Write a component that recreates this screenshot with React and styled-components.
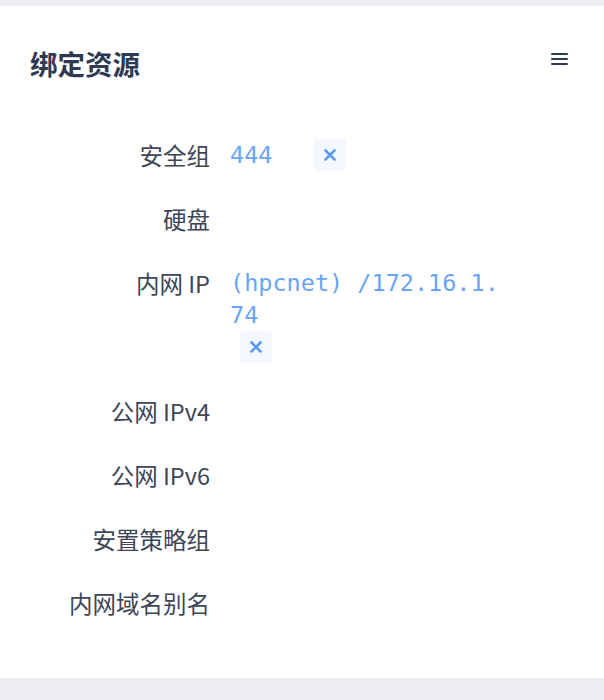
import styled, { createGlobalStyle } from "styled-components";

const GlobalStyle = createGlobalStyle`
  html, body {
    margin: 0;
    padding: 0;
    background: #edeff3;
    font-family: "Noto Sans", "Noto Sans CJK SC", sans-serif;
  }
`;

const Card = styled.section`
  margin-top: 6px;
  background: #ffffff;
  padding: 39px 0 27px;
`;

const Header = styled.header`
  display: flex;
  justify-content: space-between;
  align-items: flex-start;
  padding: 0 36px 0 30px;
  margin-bottom: 58px;
`;

const Title = styled.h2`
  margin: 0;
  font-family: "Noto Sans CJK SC", sans-serif;
  font-size: 27.5px;
  line-height: 36px;
  font-weight: 700;
  color: #2f3a52;
`;

const MenuButton = styled.button`
  border: 0;
  background: none;
  padding: 0;
  margin-top: 8px;
  width: 17px;
  height: 12px;
  display: flex;
  flex-direction: column;
  justify-content: space-between;
  cursor: pointer;

  span {
    display: block;
    height: 2.4px;
    background: #2f3a52;
    border-radius: 1px;
  }
`;

const List = styled.dl`
  margin: 0;
`;

const Row = styled.div`
  display: grid;
  grid-template-columns: 210px 280px;
  column-gap: 20px;
  margin-bottom: 32px;
`;

const Label = styled.dt`
  margin: 0;
  text-align: right;
  font-family: "Noto Sans CJK SC", sans-serif;
  font-size: 23.5px;
  line-height: 32px;
  color: #3e4657;
`;

const Value = styled.dd`
  margin: 0;
  font-family: "DejaVu Sans Mono", "Liberation Mono", monospace;
  font-size: 23.5px;
  line-height: 32px;
  color: #6aa5f5;
  word-break: break-all;
`;

const Remove = styled.button`
  display: ${(p) => (p.$block ? "flex" : "inline-flex")};
  align-items: center;
  justify-content: center;
  vertical-align: top;
  width: 32px;
  height: 32px;
  margin-left: ${(p) => p.$offset}px;
  padding: 0;
  border: 0;
  border-radius: 4px;
  background: #f4f8fe;
  cursor: pointer;
`;

function RemoveIcon() {
  return (
    <svg width="12" height="12" viewBox="0 0 12 12">
      <path
        d="M1.5 1.5 L10.5 10.5 M10.5 1.5 L1.5 10.5"
        stroke="#5b9cf0"
        strokeWidth="2.6"
        strokeLinecap="round"
      />
    </svg>
  );
}

const rows = [
  { label: "安全组", value: "444", remove: "inline" },
  { label: "硬盘" },
  { label: "内网 IP", value: "(hpcnet) /172.16.1.74", remove: "block" },
  { label: "公网 IPv4" },
  { label: "公网 IPv6" },
  { label: "安置策略组" },
  { label: "内网域名别名" },
];

export default function App() {
  return (
    <>
      <GlobalStyle />
      <Card>
        <Header>
          <Title>绑定资源</Title>
          <MenuButton aria-label="menu">
            <span />
            <span />
            <span />
          </MenuButton>
        </Header>
        <List>
          {rows.map((r) => (
            <Row key={r.label}>
              <Label>{r.label}</Label>
              <Value>
                {r.value}
                {r.remove && (
                  <Remove
                    $block={r.remove === "block"}
                    $offset={r.remove === "block" ? 10 : 42}
                  >
                    <RemoveIcon />
                  </Remove>
                )}
              </Value>
            </Row>
          ))}
        </List>
      </Card>
    </>
  );
}
